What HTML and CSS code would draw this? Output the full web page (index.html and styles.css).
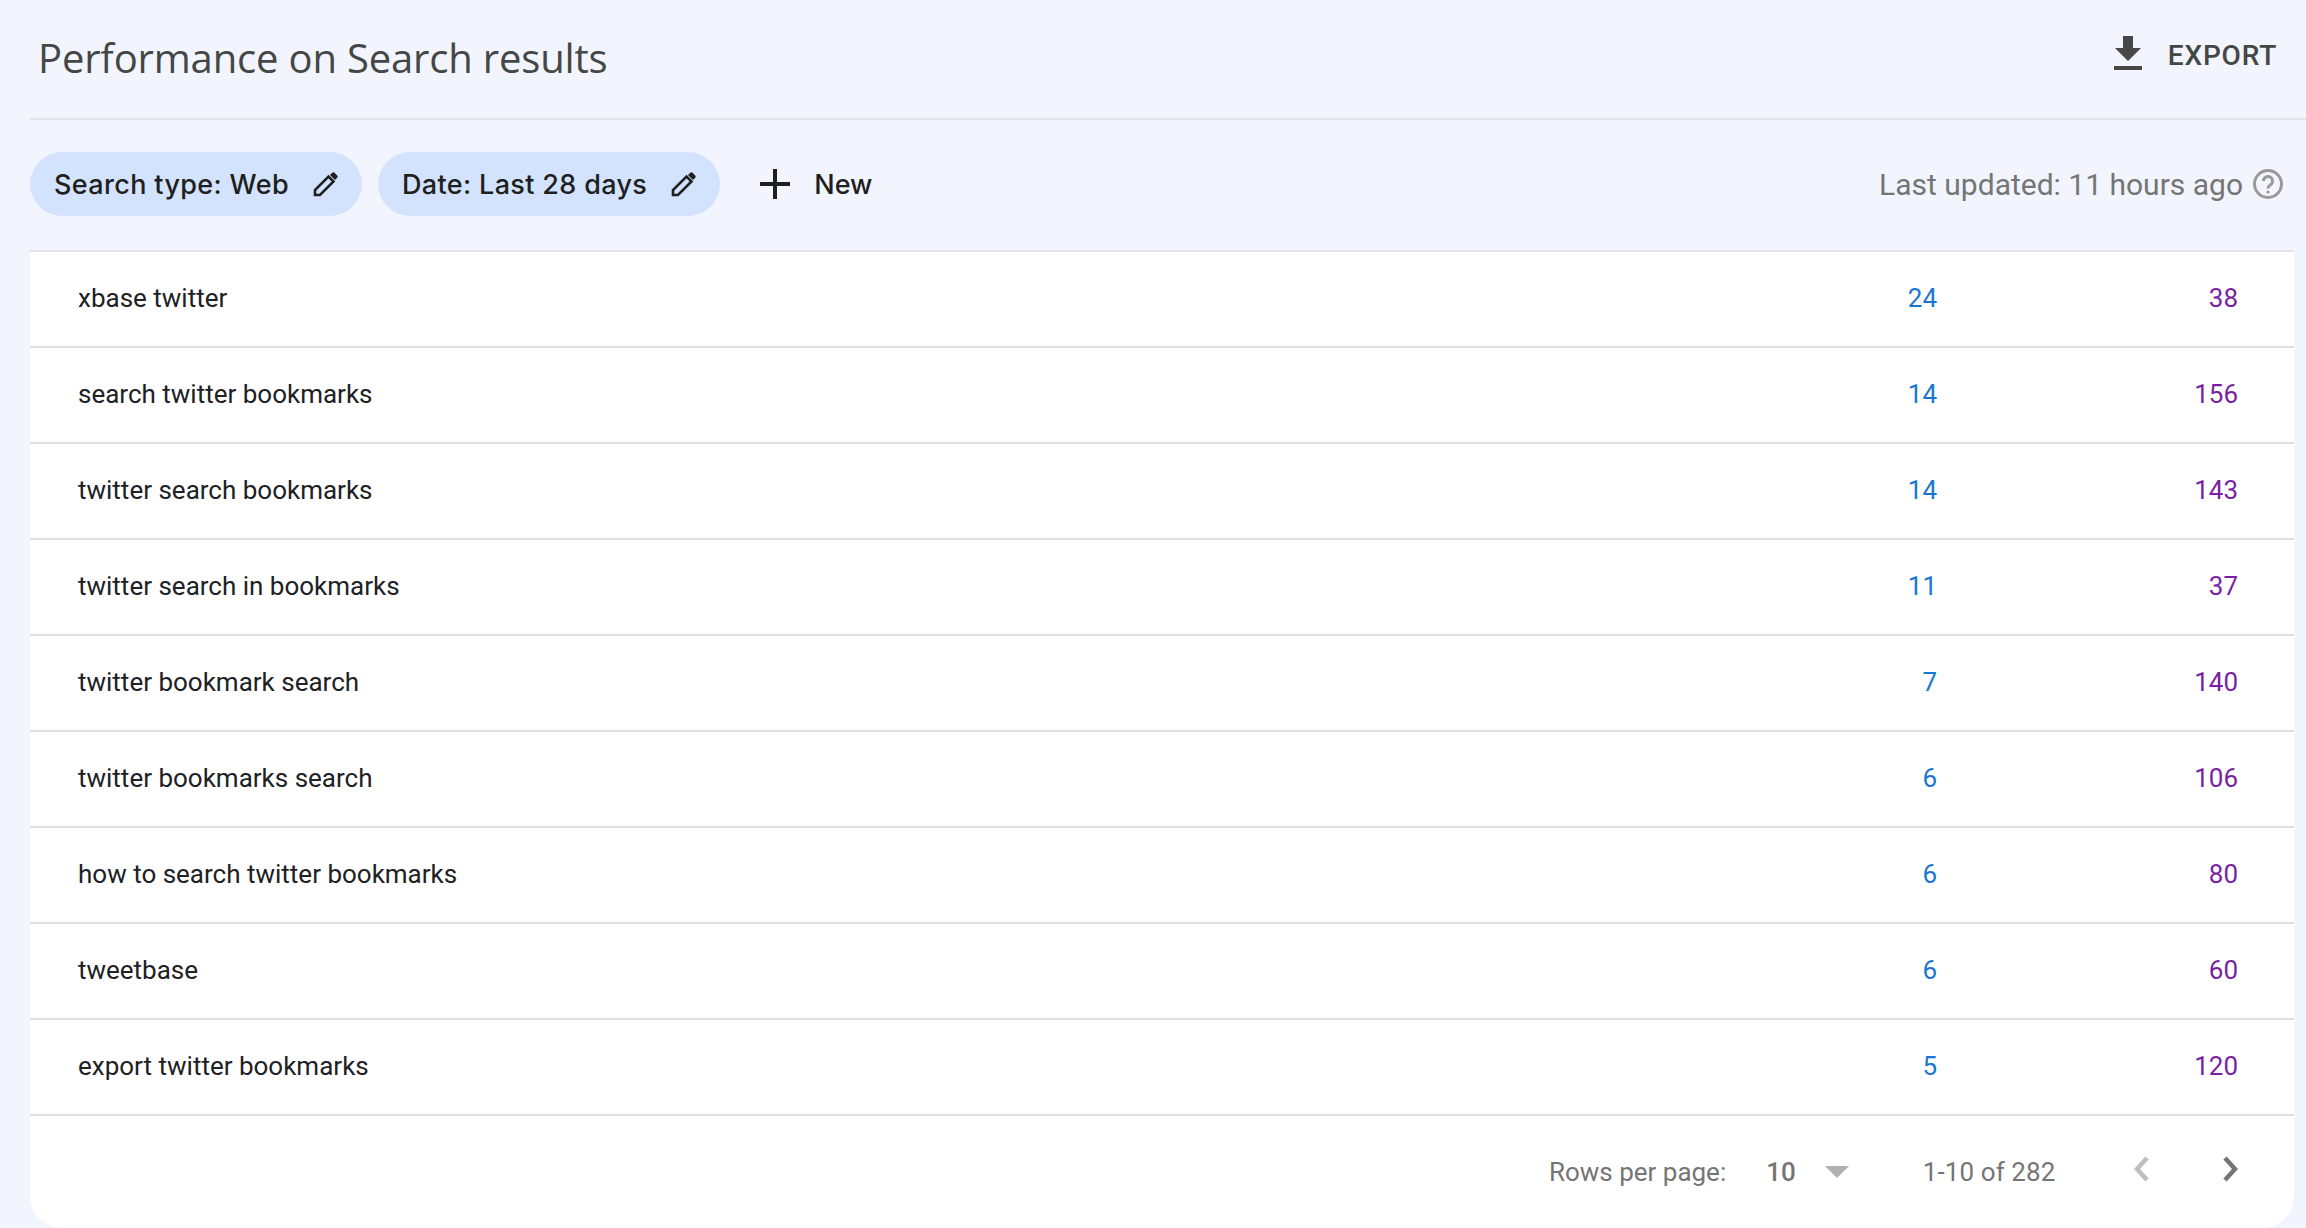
FILE: index.html
```html
<!DOCTYPE html>
<html lang="en">
<head>
<meta charset="utf-8">
<title>Performance on Search results</title>
<link rel="stylesheet" href="styles.css">
</head>
<body>
<div class="page">
  <header class="header">
    <h1 class="title">Performance on Search results</h1>
    <button class="export">
      <svg class="export-icon" viewBox="0 0 28 34"><path d="M9 0h10v12h8L14 25 1 12h8zM0 30h28v4H0z"/></svg>
      <span class="export-label">EXPORT</span>
    </button>
  </header>
  <div class="filters">
    <div class="chip"><span>Search type: Web</span>
      <svg class="pencil" viewBox="0 0 25 25"><path class="outline" d="M2 23v-5L15.5 4.5l5 5L7 23z"/><path class="cap" d="M17 3l2-2a2 2 0 0 1 2.8 0l2.2 2.2a2 2 0 0 1 0 2.8l-2 2z"/></svg></div>
    <div class="chip"><span>Date: Last 28 days</span>
      <svg class="pencil" viewBox="0 0 25 25"><path class="outline" d="M2 23v-5L15.5 4.5l5 5L7 23z"/><path class="cap" d="M17 3l2-2a2 2 0 0 1 2.8 0l2.2 2.2a2 2 0 0 1 0 2.8l-2 2z"/></svg></div>
    <div class="new">
      <svg class="plus" viewBox="0 0 30 30"><path d="M13 0h4v13h13v4H17v13h-4V17H0v-4h13z"/></svg>
      <span>New</span>
    </div>
    <div class="updated"><span>Last updated: 11 hours ago</span>
      <svg class="help" viewBox="0 0 30 30"><circle cx="15" cy="15" r="13.5"/><path d="M10.5 12a4.5 4.5 0 1 1 7 3.7c-1.6 1.1-2.5 2-2.5 3.8"/><circle class="dot" cx="15" cy="23" r="1.6"/></svg>
    </div>
  </div>
  <main class="card">
    <div class="row"><span class="query">xbase twitter</span><span class="clicks">24</span><span class="impr">38</span></div>
    <div class="row"><span class="query">search twitter bookmarks</span><span class="clicks">14</span><span class="impr">156</span></div>
    <div class="row"><span class="query">twitter search bookmarks</span><span class="clicks">14</span><span class="impr">143</span></div>
    <div class="row"><span class="query">twitter search in bookmarks</span><span class="clicks">11</span><span class="impr">37</span></div>
    <div class="row"><span class="query">twitter bookmark search</span><span class="clicks">7</span><span class="impr">140</span></div>
    <div class="row"><span class="query">twitter bookmarks search</span><span class="clicks">6</span><span class="impr">106</span></div>
    <div class="row"><span class="query">how to search twitter bookmarks</span><span class="clicks">6</span><span class="impr">80</span></div>
    <div class="row"><span class="query">tweetbase</span><span class="clicks">6</span><span class="impr">60</span></div>
    <div class="row"><span class="query">export twitter bookmarks</span><span class="clicks">5</span><span class="impr">120</span></div>
    <footer class="pager">
      <span class="rows-label">Rows per page:</span>
      <span class="rows-value">10</span>
      <span class="caret"></span>
      <span class="range">1-10 of 282</span>
      <svg class="nav nav-prev" viewBox="0 0 16 26"><path d="M13 2L3 13l10 11"/></svg>
      <svg class="nav nav-next" viewBox="0 0 16 26"><path d="M3 2l10 11L3 24"/></svg>
    </footer>
  </main>
</div>
</body>
</html>
```
FILE: styles.css
```css
* { box-sizing: border-box; }
html, body { margin: 0; height: 100%; }
body { background: #f2f5fd; font-family: Roboto, "Liberation Sans", sans-serif; overflow: hidden; }
.page { width: 2306px; height: 1228px; padding-left: 30px; display: flex; flex-direction: column; }
.header { height: 120px; border-bottom: 2px solid #e3e4e6; display: flex; align-items: flex-start; justify-content: space-between; padding: 0 29px 0 8px; }
.title { margin: 34px 0 0; font-size: 40px; line-height: 48px; font-weight: 500; letter-spacing: -0.17px; color: #444746; font-family: "Open Sans", Roboto, sans-serif; }
.export { display: flex; align-items: flex-start; gap: 26px; background: none; border: 0; padding: 0; margin-top: 36px; color: #444746; font: 500 28px/34px Roboto, sans-serif; letter-spacing: 0.8px; }
.export-label { padding-top: 3px; }
.export-icon { width: 28px; height: 34px; fill: #444746; }
.filters { height: 130px; display: flex; align-items: center; padding: 0 23px 2px 0; width: 2276px; }
.chip { height: 64px; border-radius: 32px; background: #d3e3fd; display: flex; align-items: center; padding: 0 24px; margin-right: 16px; font-family: Inter, Roboto, sans-serif; font-size: 27px; font-weight: 500; letter-spacing: 0.35px; color: #1f1f1f; gap: 24px; }
.pencil { width: 25px; height: 25px; }
.pencil .outline { fill: none; stroke: #1f1f1f; stroke-width: 2.6; }
.pencil .cap { fill: #1f1f1f; }
.new { display: flex; align-items: center; gap: 24px; margin-left: 24px; font-family: Inter, Roboto, sans-serif; font-size: 27px; font-weight: 500; color: #1f1f1f; }
.plus { width: 30px; height: 30px; fill: #1f1f1f; }
.updated { margin-left: auto; display: flex; align-items: center; gap: 10px; font-size: 30px; color: #757575; }
.help { width: 30px; height: 30px; fill: none; stroke: #9a9a9a; stroke-width: 3; }
.help .dot { fill: #9a9a9a; stroke: none; }
.card { flex: 1; width: 2264px; background: #fff; border-top: 2px solid #e3e4e6; border-radius: 0 0 32px 32px; display: flex; flex-direction: column; }
.row { height: 96px; flex: none; display: grid; grid-template-columns: 1fr 120px 301px; align-items: center; padding: 0 56px 2px 48px; border-bottom: 2px solid #e0e0e0; font-size: 26px; color: #202124; }
.clicks { text-align: right; color: #1976d2; }
.impr { text-align: right; color: #7b1fa2; }
.pager { flex: 1; display: flex; align-items: center; padding: 0 56px 0 0; justify-content: flex-end; font-size: 26px; color: #757575; }
.rows-value { margin-left: 40px; font-weight: 500; }
.caret { margin-left: 29.5px; border-left: 12px solid transparent; border-right: 12px solid transparent; border-top: 12px solid #b0b0b0; }
.range { margin-left: 73.5px; letter-spacing: 0.1px; }
.nav { width: 16px; height: 26px; fill: none; stroke-width: 4.5; margin-bottom: 6px; }
.nav-prev { margin-left: 78.5px; stroke: #bdbdbd; }
.nav-next { margin-left: 72px; stroke: #757575; }
```
